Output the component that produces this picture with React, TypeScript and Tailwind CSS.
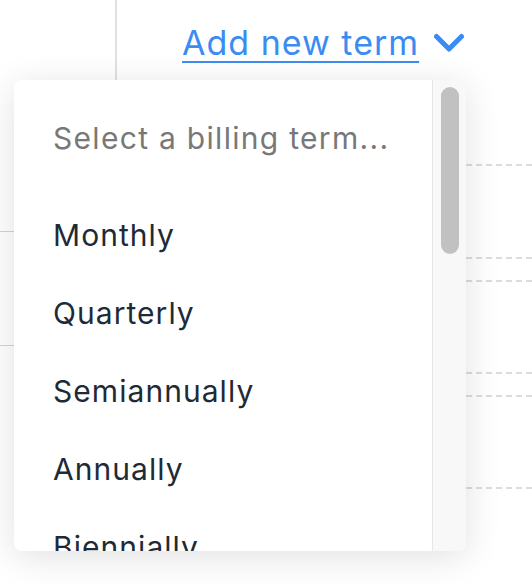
const terms = ["Monthly", "Quarterly", "Semiannually", "Annually", "Biennially"];

export default function App() {
  return (
    <div
      className="relative w-[532px] h-[586px] overflow-hidden bg-white"
      style={{ fontFamily: "Inter, 'Noto Sans', sans-serif" }}
    >
      {/* page behind the menu */}
      <div className="flex h-full items-start">
        <div className="w-[117px] h-[520px] border-r-2 border-[#e0e0e0]">
          <div className="h-[231px]" />
          <div className="h-[114px] border-t border-[#d4d4d4]" />
          <div className="border-t border-[#d4d4d4]" />
        </div>
        <div className="flex-1">
          <div className="flex items-start pl-[65px] pt-[24px] h-[66px]">
            <a className="text-[34px] leading-[38px] tracking-[1px] text-[#3b8cf2] underline decoration-2 underline-offset-[6px]">
              Add new term
            </a>
            <svg className="ml-[14px] mt-[9px]" width="32" height="20" viewBox="0 0 32 20" fill="none">
              <polyline
                points="3.5,3.5 16,16 28.5,3.5"
                stroke="#3b8cf2"
                strokeWidth="5"
                strokeLinecap="round"
                strokeLinejoin="round"
              />
            </svg>
          </div>
          <div className="h-[98px]" />
          <div className="border-t-2 border-dashed border-[#dcdcdc]" />
          <div className="h-[91px]" />
          <div className="border-t-2 border-dashed border-[#dcdcdc]" />
          <div className="h-[21px]" />
          <div className="border-t-2 border-dashed border-[#dcdcdc]" />
          <div className="h-[90px]" />
          <div className="border-t-2 border-dashed border-[#dcdcdc]" />
          <div className="h-[21px]" />
          <div className="border-t-2 border-dashed border-[#dcdcdc]" />
          <div className="h-[90px]" />
          <div className="border-t-2 border-dashed border-[#dcdcdc]" />
        </div>
      </div>

      {/* dropdown menu */}
      <div className="absolute left-[14px] top-[80px] w-[452px] h-[471px] flex rounded-lg overflow-hidden bg-white shadow-[0_6px_36px_rgba(0,0,0,0.12)]">
        <div className="flex-1 pl-[39px] pt-[30px] overflow-hidden">
          <div className="h-[56px] flex items-center text-[30px] tracking-[1.3px] text-[#787878]">
            Select a billing term...
          </div>
          <div className="h-[30px]" />
          {terms.map((t) => (
            <div key={t} className="h-[78px] flex items-center text-[30px] tracking-[1.05px] text-[#1f2a37]">
              {t}
            </div>
          ))}
        </div>
        <div className="w-[34px] bg-[#f8f8f8] border-l border-[#e6e6e6] pt-[7px] pl-[8px]">
          <div className="w-[18px] h-[167px] rounded-full bg-[#c1c1c1]" />
        </div>
      </div>
    </div>
  );
}
